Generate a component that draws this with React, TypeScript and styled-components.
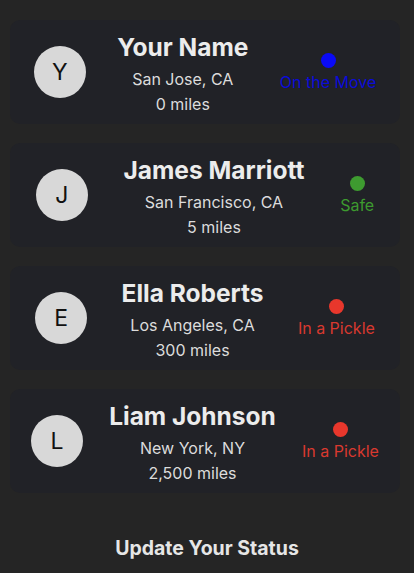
import React from "react";
import styled, { createGlobalStyle } from "styled-components";

const Global = createGlobalStyle`
  html, body { margin: 0; padding: 0; background: #252525; }
  body { font-family: Inter, "Noto Sans", "Liberation Sans", sans-serif; -webkit-font-smoothing: antialiased; }
`;

const Page = styled.div`
  width: 414px;
  min-height: 573px;
  box-sizing: border-box;
  padding: 20px 14px 0 10px;
  display: flex;
  flex-direction: column;
  gap: 19px;
  background: #252525;
`;

const Card = styled.div`
  height: 104px;
  box-sizing: border-box;
  padding: 0 8px;
  background: #212227;
  border-radius: 10px;
  display: flex;
  align-items: center;
  justify-content: space-around;
`;

const Avatar = styled.div`
  width: 52px;
  height: 52px;
  border-radius: 50%;
  background: #d8d8d8;
  color: #111;
  font-size: 23px;
  display: flex;
  align-items: center;
  justify-content: center;
  flex-shrink: 0;
`;

const Info = styled.div`
  display: flex;
  flex-direction: column;
  align-items: center;
  margin-top: 7px;
`;

const Name = styled.div`
  font-size: 24.5px;
  font-weight: 700;
  color: #ececec;
  line-height: 26px;
  margin-bottom: 7px;
`;

const Sub = styled.div`
  font-size: 16px;
  color: #dcdcdc;
  line-height: 25px;
`;

const Status = styled.div<{ $color: string; $dot: string }>`
  display: flex;
  flex-direction: column;
  align-items: center;
  gap: 4px;
  color: ${(p) => p.$color};
  font-size: 16px;
  line-height: 20px;
  &::before {
    content: "";
    width: 15px;
    height: 15px;
    border-radius: 50%;
    background: ${(p) => p.$dot};
  }
`;

const Footer = styled.div`
  text-align: center;
  color: #e6e6e6;
  font-size: 19.5px;
  font-weight: 700;
  margin-top: 24px;
  padding-left: 4px;
  line-height: 24px;
`;

const people = [
  { i: "Y", name: "Your Name", loc: "San Jose, CA", miles: "0 miles", status: "On the Move", color: "#0b0bd8", dot: "#0a0af5" },
  { i: "J", name: "James Marriott", loc: "San Francisco, CA", miles: "5 miles", status: "Safe", color: "#3d9a2f", dot: "#3e9b30" },
  { i: "E", name: "Ella Roberts", loc: "Los Angeles, CA", miles: "300 miles", status: "In a Pickle", color: "#d9392f", dot: "#e8372c" },
  { i: "L", name: "Liam Johnson", loc: "New York, NY", miles: "2,500 miles", status: "In a Pickle", color: "#d9392f", dot: "#e8372c" },
];

export default function App() {
  return (
    <>
      <Global />
      <Page>
        {people.map((p) => (
          <Card key={p.name}>
            <Avatar>{p.i}</Avatar>
            <Info>
              <Name>{p.name}</Name>
              <Sub>{p.loc}</Sub>
              <Sub>{p.miles}</Sub>
            </Info>
            <Status $color={p.color} $dot={p.dot}>{p.status}</Status>
          </Card>
        ))}
        <Footer>Update Your Status</Footer>
      </Page>
    </>
  );
}
